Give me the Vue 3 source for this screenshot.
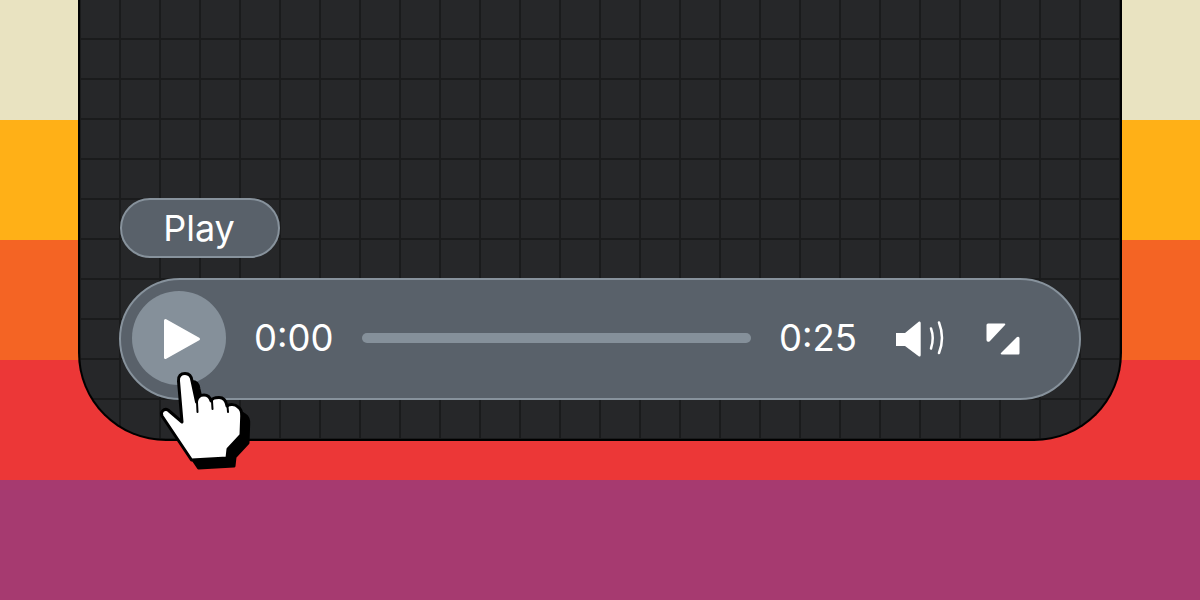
<template>
  <div class="page">
    <div class="card">
      <div class="pill">Play</div>
      <div class="player">
        <div class="play-btn">
          <svg width="38" height="42" viewBox="0 0 38 42">
            <path d="M2.500 2.500 L35.500 21 L2.500 39.500 Z" fill="#fff" stroke="#fff" stroke-width="3" stroke-linejoin="round" />
          </svg>
        </div>
        <span class="time start">0:00</span>
        <div class="track"></div>
        <span class="time end">0:25</span>
        <svg class="volume" width="48" height="38" viewBox="0 0 48 38">
          <path d="M0 13 H9 L23 1.500 Q24.700 1 24.700 3 V35 Q24.700 37 23 36.500 L9 26 H0 Z" fill="#fff" />
          <path d="M35 8.500 Q38.500 18 35 28.500" fill="none" stroke="#fff" stroke-width="2.500" stroke-linecap="round" />
          <path d="M43 2.500 Q49 18 43 33" fill="none" stroke="#fff" stroke-width="2.500" stroke-linecap="round" />
        </svg>
        <svg class="expand" width="34" height="32" viewBox="0 0 34 32">
          <path d="M2 0.500 H18.500 Q20 0.500 19 2 L3.500 18.500 Q0.500 19.500 0.500 17 V2 Q0.500 0.500 2 0.500 Z" fill="#fff" />
          <path d="M32.500 31.500 H16 Q14 31.500 15 30 L31 14 Q33.500 13 33.500 15.500 V30 Q33.500 31.500 32.500 31.500 Z" fill="#fff" />
        </svg>
      </div>
    </div>
    <svg class="cursor" width="110" height="115" viewBox="0 0 110 115">
      <path transform="translate(7 8)" :d="hand" fill="#000" stroke="#000" stroke-width="3" stroke-linejoin="round" />
      <path :d="hand" fill="#fff" stroke="#000" stroke-width="3" stroke-linejoin="round" />
      <path d="M47 42 L47.500 52 M62 41 L62.500 49 M77.500 46 L78 52" fill="none" stroke="#000" stroke-width="2" stroke-linecap="round" />
    </svg>
  </div>
</template>

<script setup>
const hand = 'M28.500 21 C28 16 31 13.500 35 13.500 C39 13.500 41.500 16 42 21 L46.500 42 C47 36 51 35 54 35 C57 35 60 37 61 41 C62 38 66 37.500 69 37.500 C73 37.500 76 40 77 46 C80 44 85 44 88 47 C91 49 92 52 91.700 56 L91 75 L78 89 L77 98 L41.500 100 L12 56 C10 52 14 48 18 50 L32 62 Z'
</script>

<style>
html, body {
  margin: 0;
}
</style>

<style scoped>
.page {
  position: relative;
  width: 1200px;
  height: 600px;
  overflow: hidden;
  background: linear-gradient(
    #e9e3c1 0 120px,
    #ffb017 120px 240px,
    #f46424 240px 360px,
    #ec3737 360px 480px,
    #a63a70 480px 600px
  );
  font-family: Inter, "Liberation Sans", sans-serif;
  color: #fff;
}
.card {
  box-sizing: border-box;
  height: 441px;
  margin: 0 78px;
  padding: 0 39px 39px;
  display: flex;
  flex-direction: column;
  justify-content: flex-end;
  align-items: flex-start;
  gap: 20px;
  border: 2px solid #000;
  border-top: none;
  border-radius: 0 0 88px 88px;
  background-color: #262729;
  background-image:
    linear-gradient(to right, #1a1b1c 2px, transparent 2px),
    linear-gradient(to bottom, #1a1b1c 2px, transparent 2px);
  background-size: 40px 40px;
  background-position: 39px 38px;
}
.pill {
  box-sizing: border-box;
  width: 160px;
  height: 60px;
  margin-left: 1px;
  padding-right: 2px;
  display: flex;
  align-items: center;
  justify-content: center;
  border: 2px solid #87929c;
  border-radius: 30px;
  background: #59616a;
  font-size: 36px;
}
.player {
  box-sizing: border-box;
  width: 962px;
  height: 122px;
  padding: 0 59px 2px 11px;
  display: flex;
  align-items: center;
  border: 2px solid #87929c;
  border-radius: 61px;
  background: #59616a;
}
.play-btn {
  width: 94px;
  height: 94px;
  flex: none;
  display: flex;
  align-items: center;
  justify-content: center;
  padding: 2px 0 0 6px;
  box-sizing: border-box;
  border-radius: 50%;
  background: #85909a;
}
.time {
  flex: none;
  font-size: 36.500px;
}
.start {
  margin: 0 28px;
}
.end {
  margin: 0 39px 0 28px;
}
.track {
  flex: 1;
  height: 10px;
  border-radius: 5px;
  background: #85909a;
}
.volume {
  flex: none;
  margin: 2px 42px 0 0;
}
.expand {
  flex: none;
  margin-top: 2px;
}
.cursor {
  position: absolute;
  left: 150px;
  top: 360px;
}
</style>
